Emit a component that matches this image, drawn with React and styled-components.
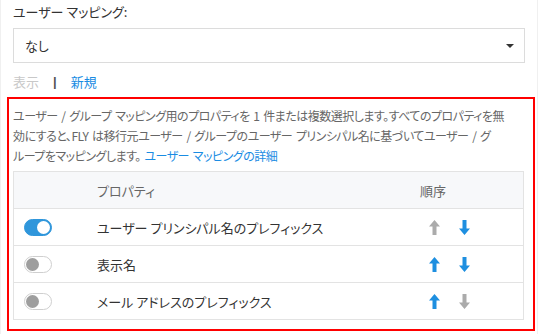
import React from "react";
import styled, { createGlobalStyle } from "styled-components";

const GlobalStyle = createGlobalStyle`
  html, body {
    margin: 0;
    padding: 0;
    background: #ffffff;
  }
  body {
    font-family: "Noto Sans CJK JP", "Noto Sans", sans-serif;
    font-feature-settings: "palt";
  }
`;

const Panel = styled.div`
  box-sizing: border-box;
  width: 538px;
  height: 334px;
  padding: 2px 12px 0 12px;
  border-left: 1px solid #f0f0f0;
  border-right: 1px solid #f0f0f0;
  overflow: hidden;
`;

const Label = styled.div`
  font-size: 13px;
  line-height: 20px;
  color: #333;
  margin-bottom: 6px;
`;

const Select = styled.div`
  box-sizing: border-box;
  height: 35px;
  border: 1px solid #dcdcdc;
  display: flex;
  align-items: center;
  justify-content: space-between;
  padding: 0 10px 0 11px;
  font-size: 13px;
  color: #333;
`;

const Caret = styled.span`
  width: 0;
  height: 0;
  border-left: 4px solid transparent;
  border-right: 4px solid transparent;
  border-top: 4px solid #333;
`;

const Links = styled.div`
  display: flex;
  align-items: center;
  gap: 14px;
  margin-top: 9px;
  font-size: 13px;
  line-height: 20px;
`;

const LinkText = styled.span`
  color: ${(p) => (p.$disabled ? "#c8c8c8" : "#1a8ce3")};
`;

const Divider = styled.span`
  font-family: "Liberation Sans", sans-serif;
  font-weight: bold;
  color: #555;
`;

const Highlight = styled.div`
  margin: 5px -10px 0 -6px;
  border: 2px solid #ff0000;
  padding: 7px 9px 9px 4px;
`;

const Description = styled.p`
  margin: 0;
  font-size: 12px;
  letter-spacing: -0.5px;
  word-spacing: 1.5px;
  line-height: 20px;
  color: #666;
  white-space: nowrap;
`;

const InlineLink = styled.span`
  color: #1a8ce3;
`;

const Table = styled.div`
  margin-top: 5px;
  border: 1px solid #e3e3e3;
`;

const Row = styled.div`
  display: grid;
  grid-template-columns: 82px 1fr 103px;
  align-items: center;
  height: 36px;
  background: ${(p) => (p.$header ? "#f7f8fa" : "#fff")};
  border-top: ${(p) => (p.$header ? "none" : "1px solid #e3e3e3")};
  font-size: 13px;
  color: ${(p) => (p.$header ? "#666" : "#333")};
`;

const Cell = styled.div`
  padding-left: ${(p) => p.$pad || 0}px;
  display: flex;
  align-items: center;
  gap: ${(p) => p.$gap || 0}px;
`;

const Toggle = styled.span`
  box-sizing: border-box;
  position: relative;
  width: 28px;
  height: 17px;
  border-radius: 9px;
  background: ${(p) => (p.$on ? "#2f96db" : "#fff")};
  border: 1px solid ${(p) => (p.$on ? "#2f96db" : "#cfcfcf")};

  &::after {
    content: "";
    position: absolute;
    top: 1px;
    left: ${(p) => (p.$on ? "12px" : "1px")};
    width: 13px;
    height: 13px;
    border-radius: 50%;
    background: ${(p) => (p.$on ? "#fff" : "#9e9e9e")};
  }
`;

const Arrow = ({ down, active }) => (
  <svg
    width="11"
    height="15"
    viewBox="0 0 11 15"
    style={{ transform: down ? "rotate(180deg)" : "none" }}
  >
    <polygon
      points="5.5,0 11,6.5 7.5,6.5 7.5,15 3.5,15 3.5,6.5 0,6.5"
      fill={active ? "#1e8fe0" : "#ababab"}
    />
  </svg>
);

const rows = [
  { name: "ユーザー プリンシパル名のプレフィックス", on: true, up: false, down: true },
  { name: "表示名", on: false, up: true, down: true },
  { name: "メール アドレスのプレフィックス", on: false, up: true, down: false },
];

export default function App() {
  return (
    <>
      <GlobalStyle />
      <Panel>
        <Label>ユーザー マッピング:</Label>
        <Select>
          <span>なし</span>
          <Caret />
        </Select>
        <Links>
          <LinkText $disabled>表示</LinkText>
          <Divider>|</Divider>
          <LinkText>新規</LinkText>
        </Links>
        <Highlight>
          <Description>
            ユーザー / グループ マッピング用のプロパティを 1 件または複数選択します。すべてのプロパティを無
            <br />
            効にすると、FLY は移行元ユーザー / グループのユーザー プリンシパル名に基づいてユーザー / グ
            <br />
            ループをマッピングします。 <InlineLink>ユーザー マッピングの詳細</InlineLink>
          </Description>
          <Table>
            <Row $header>
              <Cell />
              <Cell $pad={1}>プロパティ</Cell>
              <Cell>順序</Cell>
            </Row>
            {rows.map((r) => (
              <Row key={r.name}>
                <Cell $pad={10}>
                  <Toggle $on={r.on} />
                </Cell>
                <Cell $pad={1}>{r.name}</Cell>
                <Cell $pad={9} $gap={19}>
                  <Arrow active={r.up} />
                  <Arrow down active={r.down} />
                </Cell>
              </Row>
            ))}
          </Table>
        </Highlight>
      </Panel>
    </>
  );
}
